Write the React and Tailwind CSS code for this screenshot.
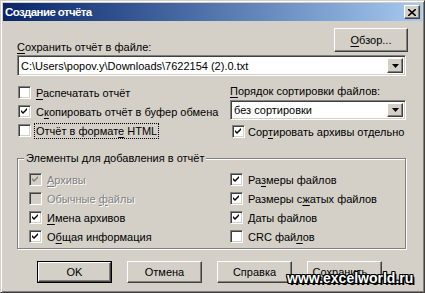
import React from "react";

const raised =
  "border border-t-white border-l-white border-b-[#404040] border-r-[#404040] shadow-[inset_-1px_-1px_0_#808080,inset_1px_1px_0_#d4d0c8]";
const sunken =
  "border border-t-[#808080] border-l-[#808080] border-b-white border-r-white shadow-[inset_1px_1px_0_#404040,inset_-1px_-1px_0_#d4d0c8]";

function U({ children }) {
  return <span className="underline underline-offset-[2px] decoration-1">{children}</span>;
}

function Check({ checked, disabled }) {
  return (
    <div
      className={`w-[13px] h-[13px] shrink-0 flex items-center justify-center ${sunken} ${
        disabled ? "bg-[#d4d0c8]" : "bg-white"
      }`}
    >
      {checked && (
        <svg width="7" height="7" viewBox="0 0 7 7" className="block">
          <path
            d="M0 2 L2 4 L6 0 L6 2 L2 6 L0 4 Z"
            fill={disabled ? "#808080" : "#000"}
          />
        </svg>
      )}
    </div>
  );
}

function CheckRow({ checked, disabled, children, gap = "gap-[5px]", focus }) {
  return (
    <div className={`h-[19px] flex items-center ${gap}`}>
      <Check checked={checked} disabled={disabled} />
      <span
        className={`${disabled ? "text-[#808080] [text-shadow:1px_1px_0_#fff]" : "text-black"} ${
          focus ? "outline outline-1 outline-dotted outline-black px-[1px] -ml-[1px]" : ""
        } leading-[14px] whitespace-nowrap`}
      >
        {children}
      </span>
    </div>
  );
}

function Arrow() {
  return (
    <div className={`w-[16px] h-full bg-[#d4d0c8] flex items-center justify-center ${raised}`}>
      <svg width="7" height="4" viewBox="0 0 7 4" className="block">
        <path d="M0 0 H7 L3.5 4 Z" fill="#000" />
      </svg>
    </div>
  );
}

function Combo({ text, h }) {
  return (
    <div className={`${h} bg-white flex items-stretch p-[2px] ${sunken}`}>
      <div className="flex-1 flex items-center pl-[1px] leading-[14px] whitespace-nowrap overflow-hidden">
        {text}
      </div>
      <Arrow />
    </div>
  );
}

function Btn({ children, def }) {
  const inner = (
    <div
      className={`w-full h-full flex items-center justify-center bg-[#d4d0c8] ${raised}`}
    >
      {children}
    </div>
  );
  return def ? (
    <div className="w-[75px] h-[22px] border border-black">{inner}</div>
  ) : (
    <div className="w-[75px] h-[22px]">{inner}</div>
  );
}

export default function App() {
  return (
    <div
      className="relative w-[425px] h-[293px] bg-[#d4d0c8] border border-t-[#d4d0c8] border-l-[#d4d0c8] border-b-[#404040] border-r-[#404040] shadow-[inset_1px_1px_0_#fff,inset_-1px_-1px_0_#808080] p-[2px] text-[11px] text-black overflow-hidden"
      style={{ fontFamily: '"Liberation Sans", Arial, sans-serif' }}
    >
      {/* Title bar */}
      <div className="h-[18px] bg-gradient-to-r from-[#0a246a] to-[#a6caf0] flex items-center justify-between pl-[2px] pr-[2px]">
        <span className="text-white font-bold text-[11.5px] leading-[16px] tracking-[-0.6px]">
          Создание отчёта
        </span>
        <div className={`w-[16px] h-[14px] bg-[#d4d0c8] flex items-center justify-center ${raised}`}>
          <svg width="8" height="7" viewBox="0 0 8 7" className="block">
            <path d="M0 0 L8 7 M8 0 L0 7" stroke="#000" strokeWidth="1.6" />
          </svg>
        </div>
      </div>

      {/* Body */}
      <div className="pl-[14px] pr-[16px] pt-[7px]">
        <div className="flex justify-between items-end h-[24px]">
          <span className="leading-[14px] -mb-[2px]">
            <U>С</U>охранить отчёт в файле:
          </span>
          <div className="w-[74px] h-[24px] -mr-[2px]">
            <div className={`w-full h-full flex items-center justify-center bg-[#d4d0c8] ${raised}`}>
              <span>
                <U>О</U>бзор...
              </span>
            </div>
          </div>
        </div>

        <div className="mt-[3px]">
          <Combo h="h-[21px]" text="C:\Users\popov.y\Downloads\7622154 (2).0.txt" />
        </div>

        <div className="flex mt-[7px]">
          <div className="w-[213px] pl-[1px]">
            <CheckRow>
              <U>Р</U>аспечатать отчёт
            </CheckRow>
            <CheckRow checked>
              С<U>к</U>опировать отчёт в буфер обмена
            </CheckRow>
            <CheckRow focus>
              Отчёт в формат<U>е</U> HTML
            </CheckRow>
          </div>
          <div className="flex-1">
            <div className="leading-[14px] mt-[1px]">
              <U>П</U>орядок сортировки файлов:
            </div>
            <div className="mt-[2px]">
              <Combo h="h-[20px]" text="без сортировки" />
            </div>
            <div className="pl-[2px] mt-[2px]">
              <CheckRow checked gap="gap-[3px]">
                Сор<U>т</U>ировать архивы отдельно
              </CheckRow>
            </div>
          </div>
        </div>

        {/* Group box */}
        <div className="relative mt-[17px] h-[91px] border border-[#808080] shadow-[inset_1px_1px_0_#fff,1px_1px_0_#fff] pt-[11px] pl-[11px]">
          <div className="absolute left-[6px] -top-[8px] bg-[#d4d0c8] px-[2px] leading-[14px]">
            Элементы для добавления в отчёт
          </div>
          <div className="grid grid-cols-[201px_1fr]">
            <div>
              <CheckRow checked disabled>
                <U>А</U>рхивы
              </CheckRow>
              <CheckRow disabled>
                Обычные <U>ф</U>айлы
              </CheckRow>
              <CheckRow checked>
                <U>И</U>мена архивов
              </CheckRow>
              <CheckRow checked>
                О<U>б</U>щая информация
              </CheckRow>
            </div>
            <div>
              <CheckRow checked>
                Ра<U>з</U>меры файлов
              </CheckRow>
              <CheckRow checked>
                Размеры с<U>ж</U>атых файлов
              </CheckRow>
              <CheckRow checked>
                <U>Д</U>аты файлов
              </CheckRow>
              <CheckRow>
                CRC фай<U>л</U>ов
              </CheckRow>
            </div>
          </div>
        </div>

        {/* Buttons */}
        <div className="flex gap-[15px] mt-[12px] pl-[20px]">
          <Btn def>OK</Btn>
          <Btn>Отмена</Btn>
          <Btn>Справка</Btn>
          <Btn>Сохранить...</Btn>
        </div>
      </div>

      {/* Watermark */}
      <div
        className="absolute left-[286px] top-[269px] text-white font-bold text-[14px] leading-[16px]"
        style={{
          fontFamily: '"Liberation Sans", Arial, sans-serif',
          textShadow:
            "1px 0 0 #000,-1px 0 0 #000,0 1px 0 #000,0 -1px 0 #000,1px 1px 0 #000,-1px -1px 0 #000,1px -1px 0 #000,-1px 1px 0 #000,2px 2px 0 #000",
        }}
      >
        www.excelworld.ru
      </div>
    </div>
  );
}
